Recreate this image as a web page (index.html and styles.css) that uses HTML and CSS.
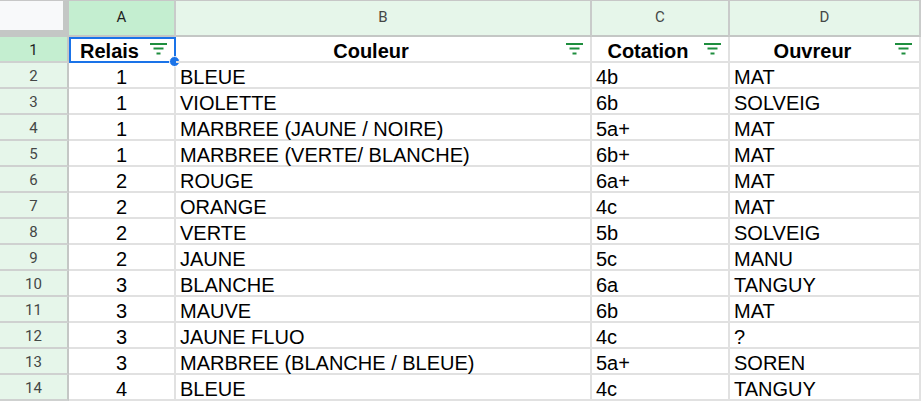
FILE: index.html
```html
<!DOCTYPE html>
<html lang="fr">
<head>
<meta charset="utf-8">
<title>Relais</title>
<link rel="stylesheet" href="styles.css">
</head>
<body>
<div class="sheet">
  <div class="corner"></div>
  <div class="colhead sel">A</div>
  <div class="colhead">B</div>
  <div class="colhead">C</div>
  <div class="colhead">D</div>

  <div class="rowhead sel">1</div>
  <div class="cell head active"><span class="lbl">Relais</span><svg class="filt" width="17" height="12" viewBox="0 0 17 12"><rect x="0" y="0" width="17" height="2"/><rect x="3.5" y="4.5" width="10" height="2"/><rect x="6.5" y="9.5" width="4" height="2"/></svg><div class="selbox"><div class="handle"></div></div></div>
  <div class="cell head"><span class="lbl">Couleur</span><svg class="filt" width="17" height="12" viewBox="0 0 17 12"><rect x="0" y="0" width="17" height="2"/><rect x="3.5" y="4.5" width="10" height="2"/><rect x="6.5" y="9.5" width="4" height="2"/></svg></div>
  <div class="cell head"><span class="lbl">Cotation</span><svg class="filt" width="17" height="12" viewBox="0 0 17 12"><rect x="0" y="0" width="17" height="2"/><rect x="3.5" y="4.5" width="10" height="2"/><rect x="6.5" y="9.5" width="4" height="2"/></svg></div>
  <div class="cell head"><span class="lbl">Ouvreur</span><svg class="filt" width="17" height="12" viewBox="0 0 17 12"><rect x="0" y="0" width="17" height="2"/><rect x="3.5" y="4.5" width="10" height="2"/><rect x="6.5" y="9.5" width="4" height="2"/></svg></div>

  <div class="rowhead">2</div><div class="cell num">1</div><div class="cell">BLEUE</div><div class="cell">4b</div><div class="cell">MAT</div>
  <div class="rowhead">3</div><div class="cell num">1</div><div class="cell">VIOLETTE</div><div class="cell">6b</div><div class="cell">SOLVEIG</div>
  <div class="rowhead">4</div><div class="cell num">1</div><div class="cell">MARBREE (JAUNE / NOIRE)</div><div class="cell">5a+</div><div class="cell">MAT</div>
  <div class="rowhead">5</div><div class="cell num">1</div><div class="cell">MARBREE (VERTE/ BLANCHE)</div><div class="cell">6b+</div><div class="cell">MAT</div>
  <div class="rowhead">6</div><div class="cell num">2</div><div class="cell">ROUGE</div><div class="cell">6a+</div><div class="cell">MAT</div>
  <div class="rowhead">7</div><div class="cell num">2</div><div class="cell">ORANGE</div><div class="cell">4c</div><div class="cell">MAT</div>
  <div class="rowhead">8</div><div class="cell num">2</div><div class="cell">VERTE</div><div class="cell">5b</div><div class="cell">SOLVEIG</div>
  <div class="rowhead">9</div><div class="cell num">2</div><div class="cell">JAUNE</div><div class="cell">5c</div><div class="cell">MANU</div>
  <div class="rowhead">10</div><div class="cell num">3</div><div class="cell">BLANCHE</div><div class="cell">6a</div><div class="cell">TANGUY</div>
  <div class="rowhead">11</div><div class="cell num">3</div><div class="cell">MAUVE</div><div class="cell">6b</div><div class="cell">MAT</div>
  <div class="rowhead">12</div><div class="cell num">3</div><div class="cell">JAUNE FLUO</div><div class="cell">4c</div><div class="cell">?</div>
  <div class="rowhead">13</div><div class="cell num">3</div><div class="cell">MARBREE (BLANCHE / BLEUE)</div><div class="cell">5a+</div><div class="cell">SOREN</div>
  <div class="rowhead">14</div><div class="cell num">4</div><div class="cell">BLEUE</div><div class="cell">4c</div><div class="cell">TANGUY</div>
</div>
</body>
</html>
```

FILE: styles.css
```css
* { box-sizing: border-box; }
html, body { margin: 0; padding: 0; background: #ffffff; }
body { width: 922px; height: 402px; overflow: hidden; font-family: "Liberation Sans", Arial, sans-serif; }

.sheet {
  display: grid;
  grid-template-columns: 69px 107px 416px 138px 191px;
  grid-template-rows: 37px repeat(14, 26px);
}

.corner {
  background: #f8f9fa;
  border-top: 1px solid #c7c7c7;
  border-right: 6px solid #c4c7c5;
  border-bottom: 7px solid #c4c7c5;
}

.colhead {
  background: #e6f6ea;
  border-top: 1px solid #c7c7c7;
  border-right: 2px solid #c9cbca;
  border-bottom: 2px solid #c4c7c5;
  text-align: center;
  font-family: "Roboto", "Liberation Sans", sans-serif;
  font-size: 15px;
  line-height: 15px;
  padding-top: 9px;
  color: #444746;
}
.colhead.sel { background: #c4eed0; color: #1f1f1f; }

.rowhead {
  background: #e6f6ea;
  border-right: 2px solid #c4c7c5;
  border-bottom: 2px solid #cfd1d0;
  text-align: center;
  font-family: "Roboto", "Liberation Sans", sans-serif;
  font-size: 15px;
  line-height: 15px;
  padding-top: 6px;
  color: #444746;
}
.rowhead.sel { background: #c4eed0; color: #1f1f1f; }

.cell {
  border-right: 2px solid #e1e1e1;
  border-bottom: 2px solid #e1e1e1;
  font-size: 20px;
  line-height: 20px;
  padding: 4px 4px 0 4px;
  color: #000;
  white-space: nowrap;
  overflow: visible;
}
.cell.num { text-align: center; }

.cell.head {
  position: relative;
  display: flex;
  align-items: flex-start;
  font-weight: bold;
  padding-right: 0;
}
.cell.head .lbl { flex: 1; text-align: center; }
.filt {
  flex: none;
  fill: #1e8e3e;
  margin: 2px 7px 0 4px;
}

.selbox {
  position: absolute;
  left: 0;
  top: 0;
  right: -2px;
  bottom: -2px;
  border: 2px solid #1a73e8;
  pointer-events: none;
}
.handle {
  position: absolute;
  right: -6px;
  bottom: -6px;
  width: 11px;
  height: 11px;
  border-radius: 50%;
  background: #1a73e8;
  border: 1px solid #ffffff;
}
```
